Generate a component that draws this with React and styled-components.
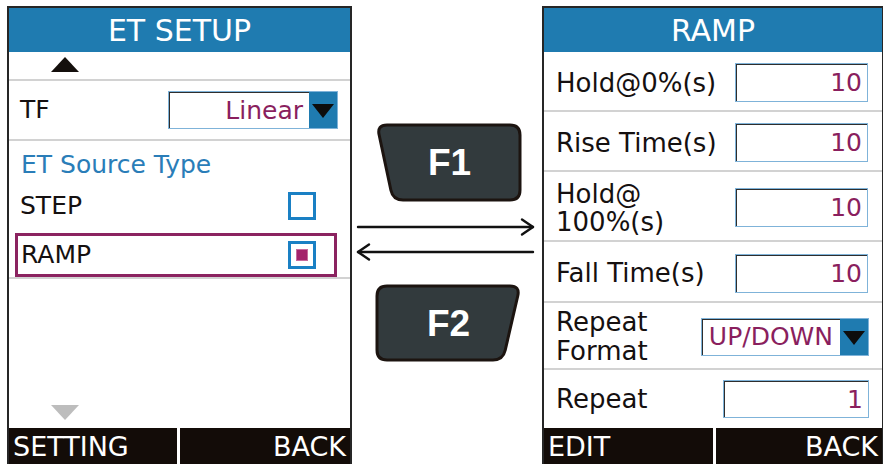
import React from "react";
import styled, { createGlobalStyle } from "styled-components";

const Global = createGlobalStyle`
  html, body { margin: 0; padding: 0; background: #ffffff; overflow: hidden; }
  body { font-family: "DejaVu Sans", "Liberation Sans", sans-serif; }
  * { box-sizing: border-box; }
`;

const BLUE = "#1f7bb0";
const PURPLE = "#8a1f5e";
const LINE = "#d2d2d2";

const Page = styled.div`
  display: flex;
  align-items: flex-start;
  width: 883px;
  height: 464px;
  padding: 6px 0 0 7px;
  overflow: hidden;
`;

const Panel = styled.section`
  flex-shrink: 0;
  width: ${(p) => p.$w}px;
  height: 458px;
  border: 2px solid #262626;
  border-bottom: none;
  display: flex;
  flex-direction: column;
  background: #fff;
`;

const Header = styled.header`
  height: 44px;
  flex-shrink: 0;
  background: ${BLUE};
  color: #fff;
  font-size: 30px;
  display: flex;
  align-items: center;
  justify-content: center;
  padding-top: 1px;
`;

const ScrollRow = styled.div`
  display: flex;
  align-items: flex-end;
  height: ${(p) => p.$h}px;
  padding: 0 0 ${(p) => p.$pb}px 42px;
  border-bottom: ${(p) => (p.$line ? `2px solid ${LINE}` : "none")};
  margin-top: ${(p) => (p.$bottom ? "auto" : "0")};
  flex-shrink: 0;
`;

const Triangle = styled.div`
  width: 0;
  height: 0;
  border-left: 14.5px solid transparent;
  border-right: 14.5px solid transparent;
  ${(p) =>
    p.$down
      ? `border-top: 15px solid ${p.$color};`
      : `border-bottom: 15px solid ${p.$color};`}
`;

const Row = styled.div`
  display: flex;
  align-items: center;
  justify-content: space-between;
  flex-shrink: 0;
  height: ${(p) => p.$h}px;
  padding: ${(p) => p.$pt || 0}px ${(p) => p.$pr}px 0 ${(p) => p.$pl}px;
  border-bottom: ${(p) => (p.$line ? `2px solid ${LINE}` : "none")};
`;

const Label = styled.span`
  font-size: ${(p) => p.$size || 25}px;
  color: #151010;
  line-height: ${(p) => p.$lh || 30}px;
  white-space: nowrap;
`;

const SectionTitle = styled.div`
  height: 46px;
  flex-shrink: 0;
  display: flex;
  align-items: center;
  padding-left: 12px;
  font-size: 25px;
  color: #2a7db8;
`;

const OptionBlock = styled.div`
  padding: 8px 0 0 6px;
  border-bottom: 2px solid ${LINE};
  flex-shrink: 0;
`;

const SelectedFrame = styled.div`
  width: 322px;
  height: 44px;
  border: 3px solid #8b2360;
  display: flex;
  align-items: center;
  justify-content: space-between;
  padding: 0 18px 0 3px;
`;

const Check = styled.div`
  width: 28px;
  height: 28px;
  border: 3px solid #1a80c4;
  background: #fff;
  display: flex;
  align-items: center;
  justify-content: center;
`;

const CheckMark = styled.div`
  width: 12px;
  height: 12px;
  background: #a3236b;
  border: 1px solid #c86a9c;
`;

const Field = styled.div`
  width: ${(p) => p.$w}px;
  height: ${(p) => p.$h || 39}px;
  border: 1px solid #7fb3d9;
  box-shadow: inset 1px 1px 0 #2e2e2e;
  background: #fff;
  display: flex;
  align-items: center;
  justify-content: flex-end;
  padding-right: 5px;
  font-size: 25px;
  color: ${PURPLE};
`;

const Select = styled.div`
  width: ${(p) => p.$w}px;
  height: 38px;
  border: 1px solid #7fb3d9;
  box-shadow: inset 1px 1px 0 #2e2e2e;
  background: #fff;
  display: flex;
  align-items: stretch;
`;

const SelectValue = styled.div`
  flex: 1;
  display: flex;
  align-items: center;
  justify-content: flex-end;
  padding-right: ${(p) => p.$pr}px;
  font-size: 25px;
  color: ${PURPLE};
  white-space: nowrap;
`;

const SelectButton = styled.div`
  width: 28px;
  background: ${BLUE};
  display: flex;
  align-items: center;
  justify-content: center;
  padding-top: 2px;
`;

const SelectArrow = styled.div`
  width: 0;
  height: 0;
  border-left: 11px solid transparent;
  border-right: 11px solid transparent;
  border-top: 14px solid #0d0d0d;
`;

const Footer = styled.footer`
  height: 36px;
  flex-shrink: 0;
  display: grid;
  grid-template-columns: ${(p) => p.$left}px 1fr;
  column-gap: 3px;
  background: #fff;
`;

const SoftKey = styled.div`
  background: #130c08;
  color: #fff;
  font-size: 27px;
  display: flex;
  align-items: center;
  justify-content: ${(p) => (p.$right ? "flex-end" : "flex-start")};
  padding: 0 4px;
  white-space: nowrap;
  overflow: hidden;
`;

const Middle = styled.div`
  flex-shrink: 0;
  width: 190px;
  padding-top: 117px;
  display: flex;
  flex-direction: column;
`;

const KeyCap = styled.div`
  position: relative;
  width: 147px;
  height: 79px;
  margin: ${(p) => p.$mt}px 0 0 23px;
  display: flex;
  align-items: center;
  justify-content: center;
  color: #fff;
  font-family: "Liberation Sans", Arial, sans-serif;
  font-weight: 700;
  font-size: 37px;
  padding-left: ${(p) => p.$pl}px;
  & > svg {
    position: absolute;
    left: 0;
    top: 0;
  }
  & > span {
    position: relative;
  }
`;

const Arrows = styled.svg`
  display: block;
  margin-top: 15px;
`;

const F1Shape = () => (
  <svg width="147" height="79" viewBox="0 0 147 79">
    <path
      d="M12,2 H135 Q145,2 145,12 V67 Q145,77 135,77 H28 Q18,77 15.9,67.2 L4.1,11.8 Q2,2 12,2 Z"
      fill="#323a3d"
      stroke="#1c1410"
      strokeWidth="3"
      strokeLinejoin="round"
    />
  </svg>
);

const F2Shape = () => (
  <svg width="147" height="79" viewBox="0 0 147 79">
    <path
      d="M12,2 H135 Q145,2 142.8,11.75 L130.2,66.25 Q128,76 118,76 H12 Q2,76 2,66 V12 Q2,2 12,2 Z"
      fill="#323a3d"
      stroke="#1c1410"
      strokeWidth="3"
      strokeLinejoin="round"
    />
  </svg>
);

const rampRows = [
  { label: ["Hold@0%(s)"], value: "10", h: 60 },
  { label: ["Rise Time(s)"], value: "10", h: 60 },
  { label: ["Hold@", "100%(s)"], value: "10", h: 70, lh: 28 },
  { label: ["Fall Time(s)"], value: "10", h: 61 },
];

export default function App() {
  return (
    <>
      <Global />
      <Page>
        <Panel $w={345}>
          <Header>ET SETUP</Header>
          <ScrollRow $h={29} $pb={7} $line>
            <Triangle $color="#140f0c" />
          </ScrollRow>
          <Row $h={60} $pl={11} $pr={12} $line>
            <Label>TF</Label>
            <Select $w={170}>
              <SelectValue $pr={6}>Linear</SelectValue>
              <SelectButton>
                <SelectArrow />
              </SelectButton>
            </Select>
          </Row>
          <SectionTitle>ET Source Type</SectionTitle>
          <Row $h={38} $pl={11} $pr={34}>
            <Label>STEP</Label>
            <Check />
          </Row>
          <OptionBlock>
            <SelectedFrame>
              <Label>RAMP</Label>
              <Check>
                <CheckMark />
              </Check>
            </SelectedFrame>
          </OptionBlock>
          <ScrollRow $h={36} $pb={8} $bottom>
            <Triangle $down $color="#bdbdbd" />
          </ScrollRow>
          <Footer $left={168}>
            <SoftKey>SETTING</SoftKey>
            <SoftKey $right>BACK</SoftKey>
          </Footer>
        </Panel>

        <Middle>
          <KeyCap $mt={0} $pl={2}>
            <F1Shape />
            <span>F1</span>
          </KeyCap>
          <Arrows width="190" height="50" viewBox="0 0 190 50">
            <g fill="none" stroke="#111" strokeWidth="2.4" strokeLinecap="round" strokeLinejoin="round">
              <line x1="6" y1="10" x2="181" y2="10" />
              <polyline points="170,2.5 181,10 170,17.5" />
              <line x1="6" y1="35" x2="181" y2="35" />
              <polyline points="17,27.5 6,35 17,42.5" />
            </g>
          </Arrows>
          <KeyCap $mt={17} $pl={0}>
            <F2Shape />
            <span>F2</span>
          </KeyCap>
        </Middle>

        <Panel $w={342}>
          <Header>RAMP</Header>
          {rampRows.map((r, i) => (
            <Row key={i} $h={r.h} $pt={3} $pl={12} $pr={14} $line>
              <Label $size={26} $lh={r.lh}>
                {r.label.map((t, j) => (
                  <React.Fragment key={j}>
                    {j > 0 && <br />}
                    {t}
                  </React.Fragment>
                ))}
              </Label>
              <Field $w={133}>{r.value}</Field>
            </Row>
          ))}
          <Row $h={67} $pt={2} $pl={12} $pr={13} $line>
            <Label $size={26} $lh={29}>
              Repeat
              <br />
              Format
            </Label>
            <Select $w={168}>
              <SelectValue $pr={7}>UP/DOWN</SelectValue>
              <SelectButton>
                <SelectArrow />
              </SelectButton>
            </Select>
          </Row>
          <Row $h={58} $pl={12} $pr={13}>
            <Label $size={26}>Repeat</Label>
            <Field $w={146} $h={38}>
              1
            </Field>
          </Row>
          <Footer $left={169}>
            <SoftKey>EDIT</SoftKey>
            <SoftKey $right>BACK</SoftKey>
          </Footer>
        </Panel>
      </Page>
    </>
  );
}
